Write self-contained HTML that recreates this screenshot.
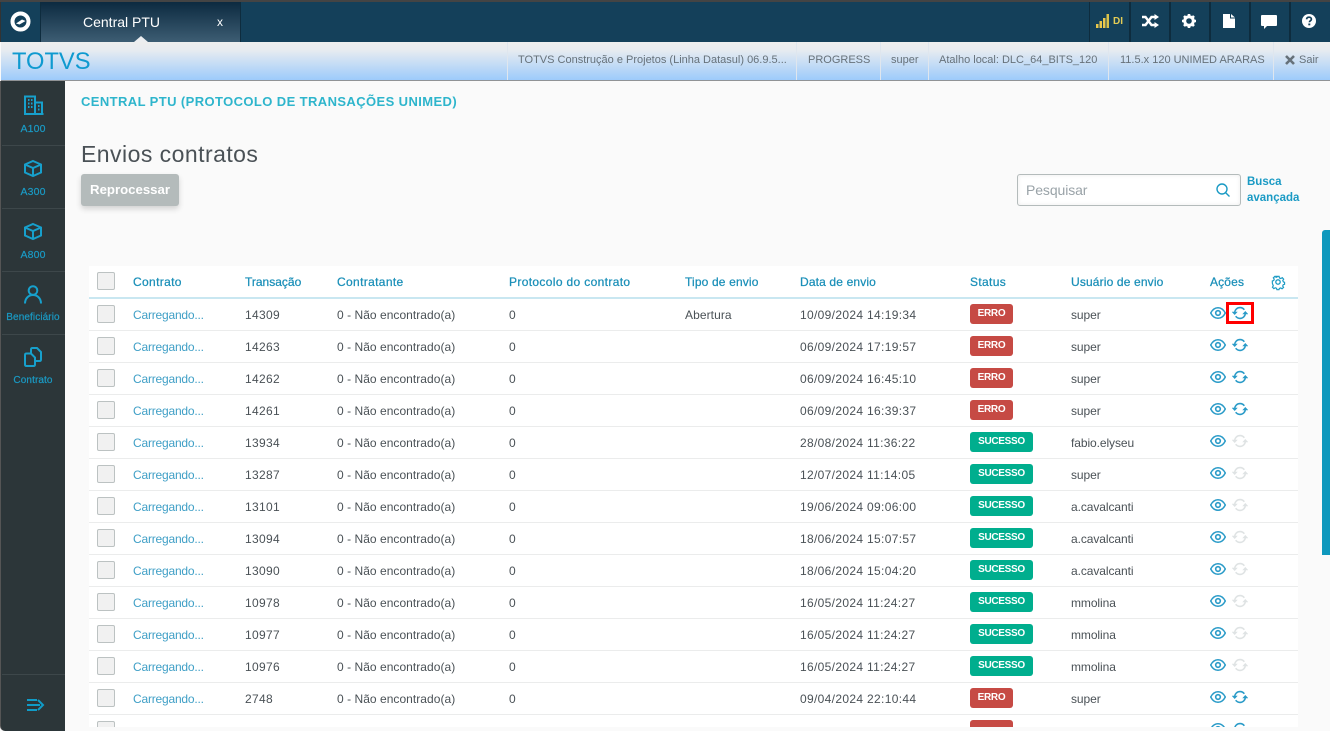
<!DOCTYPE html>
<html><head><meta charset="utf-8"><style>
html,body{margin:0;padding:0;width:1330px;height:731px;overflow:hidden;background:#fafafa;font-family:"Liberation Sans",sans-serif}
div,span,a{position:absolute;white-space:nowrap}
.sep{top:2px;width:2px;height:40px;background:#0e2c3e}
.hs{top:42px;width:1px;height:38px;background:#dfe6ee}
.ht{top:53px;font-size:11px;color:#66717a;line-height:13px}
.sb{left:1px;width:64px;text-align:center;font-size:10.5px;color:#1a9ac4;letter-spacing:.15px;-webkit-text-stroke:.2px #1a9ac4}
.sl{left:2px;width:63px;height:1px;background:#3d474a}
.th{top:275px;font-size:12px;line-height:14px;color:#1a8fb8;letter-spacing:.15px;-webkit-text-stroke:.25px #1a8fb8}
.th.w{letter-spacing:.35px}
.r{left:89px;width:1209px;height:32px;background:#fff;border-bottom:0}
.l{left:0;width:1209px;top:31px;height:2px;background:#ebecec}
.c{top:9px;font-size:12px;line-height:14px;color:#4a5156;letter-spacing:.33px}
.c.lnk{color:#3f9fc6;letter-spacing:-.2px}
.c[style*="left:248px"]{letter-spacing:.04px}
.c[style*="left:982px"]{letter-spacing:-.08px}
.c[style*="left:596px"]{letter-spacing:.08px}
.cb{left:8px;top:6px;width:16px;height:16px;border:1px solid #bcc2c2;border-radius:2px;background:#f1f1f1}
.b{left:881px;top:5px;height:20px;line-height:20px;border-radius:3px;color:#fff;font-size:10px;letter-spacing:-.3px;font-weight:bold;text-align:center}
.e{width:43px;background:#c64a44}
.s{width:63px;background:#00ae8e}
svg{position:absolute;overflow:visible}
.eye{left:1121px;top:7px}
.rf{left:1143px;top:7px}
</style></head><body>
<svg width="0" height="0" style="position:absolute"><defs>
<symbol id="eye" viewBox="0 0 16 14"><path d="M.7 7C2.600 3.300 5 1.700 8 1.700s5.400 1.600 7.300 5.300C13.400 10.700 11 12.300 8 12.300S2.600 10.700.7 7z" fill="none" stroke="currentColor" stroke-width="1.500"/><circle cx="8" cy="7" r="2.300" fill="none" stroke="currentColor" stroke-width="1.600"/></symbol>
<symbol id="rf" viewBox="0 0 16 14"><path d="M2.600 6.500C3 3.600 5.200 1.600 8 1.600c1.800 0 3.300.8 4.300 2.200M13.400 7.500C13 10.400 10.800 12.400 8 12.400c-1.800 0-3.300-.8-4.300-2.200" fill="none" stroke="currentColor" stroke-width="1.600"/><path d="M-.3 5.800l3 3.200 3-3.200zM10.300 8.200l3-3.200 3 3.200z" fill="currentColor"/></symbol>
</defs></svg>

<div style="left:0;top:0;width:1330px;height:2px;background:#444"></div>
<div style="left:0;top:2px;width:1330px;height:40px;background:#14405a"></div>
<div style="left:0;top:2px;width:1px;height:40px;background:#333"></div>
<svg style="left:10px;top:11px" width="21" height="21" viewBox="0 0 21 21"><circle cx="10.500" cy="10.500" r="8" fill="none" stroke="#fff" stroke-width="4"/><path d="M6 12.500L12 8.500l3.500 1.500-6 3.500z" fill="#fff"/></svg>
<div class="sep" style="left:40px"></div>
<div style="left:41px;top:2px;width:200px;height:40px;background:linear-gradient(#0c2a40,#3d5d73)"></div>
<div class="sep" style="left:240px;width:1px"></div>
<div style="left:83px;top:14px;font-size:14px;line-height:16px;color:#fff">Central PTU</div>
<div style="left:217px;top:15px;font-size:12px;line-height:14px;color:#fff">x</div>
<div style="left:134px;top:36px;width:0;height:0;border-left:7px solid transparent;border-right:7px solid transparent;border-bottom:6px solid #eceef0"></div>

<div class="sep" style="left:1089px;width:1px"></div>
<div class="sep" style="left:1129px"></div><div class="sep" style="left:1169px"></div><div class="sep" style="left:1209px"></div><div class="sep" style="left:1249px"></div><div class="sep" style="left:1289px"></div>
<svg style="left:1096px;top:14px" width="14" height="14"><path d="M0 10h2.500v4H0zM3.500 7H6v7H3.500zM7 4h2.500v10H7z" fill="#e9c84c"/><path d="M10.500 0H13v14h-2.500z" fill="#d9c24a"/></svg>
<div style="left:1113px;top:16px;font-size:10px;font-weight:bold;line-height:11px;color:#e3cc55;">DI</div>
<svg style="left:1142px;top:14px" width="17" height="14" viewBox="0 0 17 14"><path d="M0 3h3.500l6 8H13M0 11h3.500l6-8H13" fill="none" stroke="#fff" stroke-width="2.400"/><path d="M12.500 0L17 3l-4.500 3zM12.500 8L17 11l-4.500 3z" fill="#fff"/></svg>
<svg style="left:1182px;top:14px" width="14" height="14" viewBox="0 0 14 14"><circle cx="7" cy="7" r="4.300" fill="none" stroke="#fff" stroke-width="3"/><path d="M7 0v14M0 7h14M2 2l10 10M12 2L2 12" stroke="#fff" stroke-width="2.600" stroke-dasharray="2.400 9.200 2.400 0"/></svg>
<svg style="left:1223px;top:14px" width="12" height="14" viewBox="0 0 12 14"><path d="M0 0h7v4.500h5V14H0zM8 0l4 3.500H8z" fill="#fff"/></svg>
<svg style="left:1261px;top:15px" width="16" height="14" viewBox="0 0 16 14"><path d="M1 0h14a1 1 0 0 1 1 1v9a1 1 0 0 1-1 1H6l-3 3v-3H1a1 1 0 0 1-1-1V1a1 1 0 0 1 1-1z" fill="#fff"/></svg>
<svg style="left:1302px;top:14px" width="14" height="14" viewBox="0 0 14 14"><circle cx="7" cy="7" r="7" fill="#fff"/><path d="M4.600 5.300C4.700 3.800 5.700 3.200 7 3.200c1.400 0 2.400.8 2.400 2 0 1.600-2 1.600-2 3" fill="none" stroke="#14405a" stroke-width="1.700"/><rect x="6.300" y="9.500" width="2" height="1.800" fill="#14405a"/></svg>

<div style="left:1px;top:42px;width:1329px;height:38px;background:linear-gradient(#eeeeee 0,#e8ecf0 20%,#9dcbfb 100%)"></div>
<div style="left:1px;top:80px;width:1329px;height:1px;background:#909396"></div>
<div style="left:12px;top:48px;font-size:23.700px;line-height:29px;color:#0f9ad0">TOTVS</div>
<div class="hs" style="left:507px"></div><div class="hs" style="left:796px"></div><div class="hs" style="left:880px"></div><div class="hs" style="left:928px"></div><div class="hs" style="left:1108px"></div><div class="hs" style="left:1273px"></div>
<div class="ht" style="left:518px;top:54px">TOTVS Construção e Projetos (Linha Datasul) 06.9.5...</div>
<div class="ht" style="left:808px;top:54px">PROGRESS</div>
<div class="ht" style="left:891px;top:54px">super</div>
<div class="ht" style="left:939px;top:54px">Atalho local: DLC_64_BITS_120</div>
<div class="ht" style="left:1120px;top:54px">11.5.x 120 UNIMED ARARAS</div>
<svg style="left:1285px;top:55px" width="10" height="10" viewBox="0 0 10 10"><path d="M1 1l8 8M9 1L1 9" stroke="#66717a" stroke-width="2.600"/></svg>
<div class="ht" style="left:1299px;top:54px;font-size:11px">Sair</div>

<div style="left:0;top:81px;width:65px;height:650px;background:#2c3639;border-bottom-left-radius:5px;border-left:1px solid #555;box-sizing:border-box"></div>
<svg style="left:23px;top:95px" width="21" height="20" viewBox="0 0 21 20" fill="none" stroke="#17a0cc" stroke-width="2"><path d="M2 19V1.500h10V19M12 7.500h7V19M1 19h19.500M5 5h1.500M8 5h1.500M5 8.500h1.500M8 8.500h1.500M5 12h1.500M8 12h1.500M15 11h1.500M15 14.500h1.500"/></svg>
<div class="sb" style="top:123px">A100</div><div class="sl" style="top:145px"></div>
<svg style="left:24px;top:160px" width="18" height="17" viewBox="0 0 18 17" fill="none" stroke="#17a0cc" stroke-width="2"><path d="M9 1l8 3.500v8L9 16l-8-3.500v-8zM1 4.500L9 8l8-3.500M9 8v8"/></svg>
<div class="sb" style="top:186px">A300</div><div class="sl" style="top:208px"></div>
<svg style="left:24px;top:223px" width="18" height="17" viewBox="0 0 18 17" fill="none" stroke="#17a0cc" stroke-width="2"><path d="M9 1l8 3.500v8L9 16l-8-3.500v-8zM1 4.500L9 8l8-3.500M9 8v8"/></svg>
<div class="sb" style="top:249px">A800</div><div class="sl" style="top:271px"></div>
<svg style="left:24px;top:285px" width="18" height="19" viewBox="0 0 18 19" fill="none" stroke="#17a0cc" stroke-width="2"><circle cx="9" cy="5.500" r="4.300"/><path d="M1 18.500c0-5 3.500-8.500 8-8.500s8 3.500 8 8.500"/></svg>
<div class="sb" style="top:312px;font-size:10px;letter-spacing:.1px">Beneficiário</div><div class="sl" style="top:334px"></div>
<svg style="left:24px;top:347px" width="18" height="20" viewBox="0 0 18 20" fill="none" stroke="#17a0cc" stroke-width="2"><path d="M7 6V2.500Q7 1 8.500 1H13l4 4v7.500q0 1.500-1.500 1.500H12"/><path d="M2.500 6.500H7l4 4v7q0 1.500-1.500 1.500h-7Q1 19 1 17.500v-9.500Q1 6.500 2.500 6.500z"/></svg>
<div class="sb" style="top:375px;font-size:10px;letter-spacing:.1px">Contrato</div>
<div class="sl" style="top:674px"></div>
<svg style="left:27px;top:698px" width="17" height="14" viewBox="0 0 17 14" fill="none" stroke="#109cc8" stroke-width="2"><path d="M0 2h10M0 7h13M0 12h10M11 2l5 5-5 5"/></svg>

<div style="left:81px;top:94px;font-size:13px;line-height:15px;font-weight:bold;color:#2eb5cc;letter-spacing:.4px">CENTRAL PTU (PROTOCOLO DE TRANSAÇÕES UNIMED)</div>
<div style="left:81px;top:141px;font-size:23px;line-height:27px;color:#4a5156;letter-spacing:.46px">Envios contratos</div>
<div style="left:81px;top:174px;width:98px;height:32px;border-radius:3px;background:#b4bbbb;box-shadow:0 3px 6px rgba(0,0,0,.16);color:#fff;font-size:13.200px;font-weight:bold;line-height:32px;text-align:center">Reprocessar</div>
<div style="left:1017px;top:174px;width:222px;height:30px;border:1px solid #b4bbbb;border-radius:3px;background:#fff;box-shadow:inset 0 0 4px rgba(0,0,0,.08)"></div>
<div style="left:1026px;top:182px;font-size:14px;line-height:16px;color:#9aa3a8;letter-spacing:-.1px">Pesquisar</div>
<svg style="left:1216px;top:183px" width="14" height="14" viewBox="0 0 14 14" fill="none" stroke="#1a9ac4" stroke-width="1.400"><circle cx="6" cy="6" r="5"/><path d="M9.700 9.700L13.500 13.500"/></svg>
<div style="left:1247px;top:174px;font-size:11.500px;line-height:16px;color:#1a9ac4;font-weight:bold">Busca<br>avançada</div>

<div style="left:89px;top:266px;width:1209px;height:461px;background:#fff"></div>
<div style="left:89px;top:297px;width:1209px;height:2px;background:#c9e7f1"></div>
<div class="cb" style="left:97px;top:272px"></div>
<div class="th w" style="left:133px">Contrato</div><div class="th" style="left:245px;letter-spacing:0">Transação</div><div class="th w" style="left:337px">Contratante</div><div class="th w" style="left:509px">Protocolo do contrato</div><div class="th" style="left:685px">Tipo de envio</div><div class="th" style="left:800px">Data de envio</div><div class="th w" style="left:970px">Status</div><div class="th" style="left:1071px">Usuário de envio</div><div class="th" style="left:1210px">Ações</div>
<svg style="left:1271px;top:275px" width="14" height="14" viewBox="0 0 14 14" fill="none" stroke="#1a9ac4" stroke-width="1.300"><path d="M5.800.7h2.400l.4 1.800 1.500.7 1.600-1 1.600 1.700-1 1.500.7 1.500 1.300.4v2.300l-1.500.4-.6 1.500 1 1.500-1.700 1.500-1.500-.9-1.500.6-.4 1.300H5.800l-.4-1.500-1.500-.6-1.500 1-1.600-1.700 1-1.500-.6-1.400L.7 8.200V5.800l1.500-.4.600-1.500-1-1.500 1.700-1.600 1.500 1 1.400-.7z" transform="translate(.7 .7) scale(.9)"/><circle cx="7" cy="7" r="2.200"/></svg>

<div class="r" style="top:299px"><div class="cb"></div><div class="c lnk" style="left:44px">Carregando...</div><div class="c" style="left:156px">14309</div><div class="c" style="left:248px">0 - Não encontrado(a)</div><div class="c" style="left:420px">0</div><div class="c" style="left:596px">Abertura</div><div class="c" style="left:711px">10/09/2024 14:19:34</div><div class="b e">ERRO</div><div class="c" style="left:982px">super</div><svg class="eye" width="16" height="14" style="color:#2a9bc8"><use href="#eye"/></svg><svg class="rf" width="16" height="14" style="color:#2a9bc8"><use href="#rf"/></svg><div class="l"></div></div>
<div class="r" style="top:331px"><div class="cb"></div><div class="c lnk" style="left:44px">Carregando...</div><div class="c" style="left:156px">14263</div><div class="c" style="left:248px">0 - Não encontrado(a)</div><div class="c" style="left:420px">0</div><div class="c" style="left:711px">06/09/2024 17:19:57</div><div class="b e">ERRO</div><div class="c" style="left:982px">super</div><svg class="eye" width="16" height="14" style="color:#2a9bc8"><use href="#eye"/></svg><svg class="rf" width="16" height="14" style="color:#2a9bc8"><use href="#rf"/></svg><div class="l"></div></div>
<div class="r" style="top:363px"><div class="cb"></div><div class="c lnk" style="left:44px">Carregando...</div><div class="c" style="left:156px">14262</div><div class="c" style="left:248px">0 - Não encontrado(a)</div><div class="c" style="left:420px">0</div><div class="c" style="left:711px">06/09/2024 16:45:10</div><div class="b e">ERRO</div><div class="c" style="left:982px">super</div><svg class="eye" width="16" height="14" style="color:#2a9bc8"><use href="#eye"/></svg><svg class="rf" width="16" height="14" style="color:#2a9bc8"><use href="#rf"/></svg><div class="l"></div></div>
<div class="r" style="top:395px"><div class="cb"></div><div class="c lnk" style="left:44px">Carregando...</div><div class="c" style="left:156px">14261</div><div class="c" style="left:248px">0 - Não encontrado(a)</div><div class="c" style="left:420px">0</div><div class="c" style="left:711px">06/09/2024 16:39:37</div><div class="b e">ERRO</div><div class="c" style="left:982px">super</div><svg class="eye" width="16" height="14" style="color:#2a9bc8"><use href="#eye"/></svg><svg class="rf" width="16" height="14" style="color:#2a9bc8"><use href="#rf"/></svg><div class="l"></div></div>
<div class="r" style="top:427px"><div class="cb"></div><div class="c lnk" style="left:44px">Carregando...</div><div class="c" style="left:156px">13934</div><div class="c" style="left:248px">0 - Não encontrado(a)</div><div class="c" style="left:420px">0</div><div class="c" style="left:711px">28/08/2024 11:36:22</div><div class="b s">SUCESSO</div><div class="c" style="left:982px">fabio.elyseu</div><svg class="eye" width="16" height="14" style="color:#2a9bc8"><use href="#eye"/></svg><svg class="rf" width="16" height="14" style="color:#dfe3e4"><use href="#rf"/></svg><div class="l"></div></div>
<div class="r" style="top:459px"><div class="cb"></div><div class="c lnk" style="left:44px">Carregando...</div><div class="c" style="left:156px">13287</div><div class="c" style="left:248px">0 - Não encontrado(a)</div><div class="c" style="left:420px">0</div><div class="c" style="left:711px">12/07/2024 11:14:05</div><div class="b s">SUCESSO</div><div class="c" style="left:982px">super</div><svg class="eye" width="16" height="14" style="color:#2a9bc8"><use href="#eye"/></svg><svg class="rf" width="16" height="14" style="color:#dfe3e4"><use href="#rf"/></svg><div class="l"></div></div>
<div class="r" style="top:491px"><div class="cb"></div><div class="c lnk" style="left:44px">Carregando...</div><div class="c" style="left:156px">13101</div><div class="c" style="left:248px">0 - Não encontrado(a)</div><div class="c" style="left:420px">0</div><div class="c" style="left:711px">19/06/2024 09:06:00</div><div class="b s">SUCESSO</div><div class="c" style="left:982px">a.cavalcanti</div><svg class="eye" width="16" height="14" style="color:#2a9bc8"><use href="#eye"/></svg><svg class="rf" width="16" height="14" style="color:#dfe3e4"><use href="#rf"/></svg><div class="l"></div></div>
<div class="r" style="top:523px"><div class="cb"></div><div class="c lnk" style="left:44px">Carregando...</div><div class="c" style="left:156px">13094</div><div class="c" style="left:248px">0 - Não encontrado(a)</div><div class="c" style="left:420px">0</div><div class="c" style="left:711px">18/06/2024 15:07:57</div><div class="b s">SUCESSO</div><div class="c" style="left:982px">a.cavalcanti</div><svg class="eye" width="16" height="14" style="color:#2a9bc8"><use href="#eye"/></svg><svg class="rf" width="16" height="14" style="color:#dfe3e4"><use href="#rf"/></svg><div class="l"></div></div>
<div class="r" style="top:555px"><div class="cb"></div><div class="c lnk" style="left:44px">Carregando...</div><div class="c" style="left:156px">13090</div><div class="c" style="left:248px">0 - Não encontrado(a)</div><div class="c" style="left:420px">0</div><div class="c" style="left:711px">18/06/2024 15:04:20</div><div class="b s">SUCESSO</div><div class="c" style="left:982px">a.cavalcanti</div><svg class="eye" width="16" height="14" style="color:#2a9bc8"><use href="#eye"/></svg><svg class="rf" width="16" height="14" style="color:#dfe3e4"><use href="#rf"/></svg><div class="l"></div></div>
<div class="r" style="top:587px"><div class="cb"></div><div class="c lnk" style="left:44px">Carregando...</div><div class="c" style="left:156px">10978</div><div class="c" style="left:248px">0 - Não encontrado(a)</div><div class="c" style="left:420px">0</div><div class="c" style="left:711px">16/05/2024 11:24:27</div><div class="b s">SUCESSO</div><div class="c" style="left:982px">mmolina</div><svg class="eye" width="16" height="14" style="color:#2a9bc8"><use href="#eye"/></svg><svg class="rf" width="16" height="14" style="color:#dfe3e4"><use href="#rf"/></svg><div class="l"></div></div>
<div class="r" style="top:619px"><div class="cb"></div><div class="c lnk" style="left:44px">Carregando...</div><div class="c" style="left:156px">10977</div><div class="c" style="left:248px">0 - Não encontrado(a)</div><div class="c" style="left:420px">0</div><div class="c" style="left:711px">16/05/2024 11:24:27</div><div class="b s">SUCESSO</div><div class="c" style="left:982px">mmolina</div><svg class="eye" width="16" height="14" style="color:#2a9bc8"><use href="#eye"/></svg><svg class="rf" width="16" height="14" style="color:#dfe3e4"><use href="#rf"/></svg><div class="l"></div></div>
<div class="r" style="top:651px"><div class="cb"></div><div class="c lnk" style="left:44px">Carregando...</div><div class="c" style="left:156px">10976</div><div class="c" style="left:248px">0 - Não encontrado(a)</div><div class="c" style="left:420px">0</div><div class="c" style="left:711px">16/05/2024 11:24:27</div><div class="b s">SUCESSO</div><div class="c" style="left:982px">mmolina</div><svg class="eye" width="16" height="14" style="color:#2a9bc8"><use href="#eye"/></svg><svg class="rf" width="16" height="14" style="color:#dfe3e4"><use href="#rf"/></svg><div class="l"></div></div>
<div class="r" style="top:683px"><div class="cb"></div><div class="c lnk" style="left:44px">Carregando...</div><div class="c" style="left:156px">2748</div><div class="c" style="left:248px">0 - Não encontrado(a)</div><div class="c" style="left:420px">0</div><div class="c" style="left:711px">09/04/2024 22:10:44</div><div class="b e">ERRO</div><div class="c" style="left:982px">super</div><svg class="eye" width="16" height="14" style="color:#2a9bc8"><use href="#eye"/></svg><svg class="rf" width="16" height="14" style="color:#2a9bc8"><use href="#rf"/></svg><div class="l"></div></div>
<div style="left:89px;top:715px;width:1209px;height:12px;overflow:hidden;background:#fff"><div class="cb"></div><div class="b e" style="height:14px"></div><svg class="eye" width="16" height="14" style="color:#2a9bc8"><use href="#eye"/></svg><svg class="rf" width="16" height="14" style="color:#2a9bc8"><use href="#rf"/></svg></div>

<div style="left:1226px;top:302px;width:22px;height:16px;border:3px solid #f00"></div>
<div style="left:1322px;top:230px;width:8px;height:325px;background:#0f98bd;border-radius:3px 0 0 0"></div>
</body></html>
